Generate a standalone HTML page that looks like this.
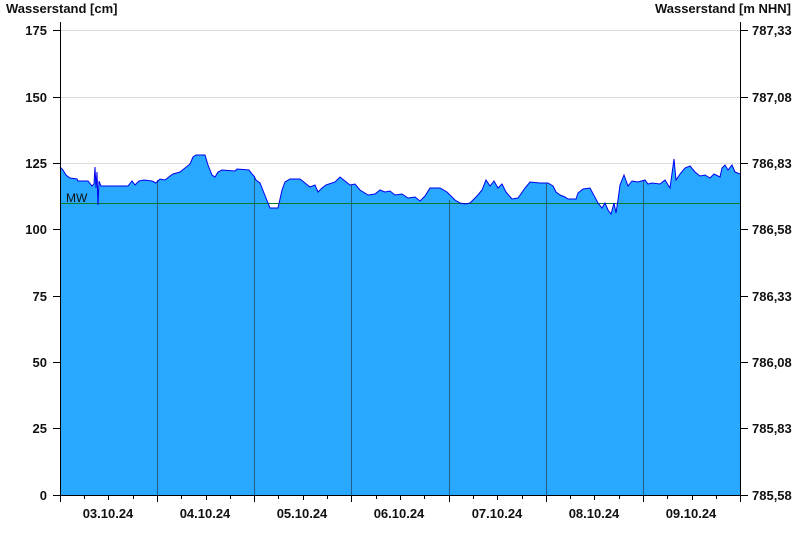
<!DOCTYPE html>
<html><head><meta charset="utf-8"><style>
html,body{margin:0;padding:0;background:#fff}
svg{display:block;font-family:"Liberation Sans",Arial,sans-serif;font-weight:bold;font-size:13px}
</style></head><body>
<svg width="800" height="550" viewBox="0 0 800 550" xmlns="http://www.w3.org/2000/svg">
<rect width="800" height="550" fill="#fff"/>
<text x="6" y="13" fill="#111">Wasserstand [cm]</text>
<text x="791" y="13" fill="#111" text-anchor="end">Wasserstand [m NHN]</text>
<g stroke="#dcdcdc" stroke-width="1">
<line x1="61" y1="30.5" x2="740" y2="30.5"/>
<line x1="61" y1="97.5" x2="740" y2="97.5"/>
<line x1="61" y1="163.5" x2="740" y2="163.5"/>
</g>
<path fill="#29a8ff" stroke="none" d="M60,495 L60,167 63,170 66,175 70,178 77,179 78,181 88,181 92,186 94,184 95,167 96,188 97,172 98,205 99,181 101,186 128,186 132,181 135,185 139,181 144,180 152,181 156,183 160,179 165,180 170,176 173,174 180,172 185,168 190,164 193,157 196,155 205,155 208,165 212,175 215,177 218,172 222,170 235,171 237,169 249,170 252,174 254,176 256,180 260,183 264,193 268,203 270,208 278,208 282,190 285,182 290,179 300,179 305,183 310,187 315,185 318,192 322,188 326,185 335,182 340,177 345,181 350,185 355,184 360,190 368,195 375,194 380,190 385,192 390,191 395,195 402,194 408,198 415,197 420,201 425,196 430,188 440,188 447,192 455,200 460,203 465,204 470,203 477,196 482,190 486,180 490,186 494,181 498,188 502,184 506,192 512,199 518,198 525,188 530,182 540,183 548,183 553,186 556,192 560,195 565,197 568,199 576,199 578,193 583,189 590,188 598,203 602,208 605,203 608,210 611,214 614,203 616,213 618,200 620,185 622,180 624,175 628,186 632,181 638,182 645,180 648,184 652,183 660,184 665,180 670,188 674,159 676,180 680,174 685,168 690,166 695,172 700,176 705,175 710,178 714,174 720,177 722,168 725,165 728,170 732,165 735,172 740,174 L740,495 Z"/>
<g stroke="#1f5f8a" stroke-width="1">
<line x1="157.5" y1="180" x2="157.5" y2="495"/>
<line x1="254.5" y1="176" x2="254.5" y2="495"/>
<line x1="351.5" y1="185" x2="351.5" y2="495"/>
<line x1="449.5" y1="200" x2="449.5" y2="495"/>
<line x1="546.5" y1="183" x2="546.5" y2="495"/>
<line x1="643.5" y1="180" x2="643.5" y2="495"/>
</g>
<line x1="61" y1="203.5" x2="740" y2="203.5" stroke="#0a7a2a" stroke-width="1"/>
<text x="66" y="202" fill="#111" font-weight="normal" font-size="12">MW</text>
<polyline fill="none" stroke="#0000ee" stroke-width="1" points="60,167 63,170 66,175 70,178 77,179 78,181 88,181 92,186 94,184 95,167 96,188 97,172 98,205 99,181 101,186 128,186 132,181 135,185 139,181 144,180 152,181 156,183 160,179 165,180 170,176 173,174 180,172 185,168 190,164 193,157 196,155 205,155 208,165 212,175 215,177 218,172 222,170 235,171 237,169 249,170 252,174 254,176 256,180 260,183 264,193 268,203 270,208 278,208 282,190 285,182 290,179 300,179 305,183 310,187 315,185 318,192 322,188 326,185 335,182 340,177 345,181 350,185 355,184 360,190 368,195 375,194 380,190 385,192 390,191 395,195 402,194 408,198 415,197 420,201 425,196 430,188 440,188 447,192 455,200 460,203 465,204 470,203 477,196 482,190 486,180 490,186 494,181 498,188 502,184 506,192 512,199 518,198 525,188 530,182 540,183 548,183 553,186 556,192 560,195 565,197 568,199 576,199 578,193 583,189 590,188 598,203 602,208 605,203 608,210 611,214 614,203 616,213 618,200 620,185 622,180 624,175 628,186 632,181 638,182 645,180 648,184 652,183 660,184 665,180 670,188 674,159 676,180 680,174 685,168 690,166 695,172 700,176 705,175 710,178 714,174 720,177 722,168 725,165 728,170 732,165 735,172 740,174"/>
<g stroke="#000" stroke-width="1">
<line x1="60.5" y1="22" x2="60.5" y2="496"/>
<line x1="740.5" y1="22" x2="740.5" y2="496"/>
<line x1="53" y1="495.5" x2="741" y2="495.5"/>
<line x1="53" y1="30.5" x2="60" y2="30.5"/><line x1="53" y1="97.5" x2="60" y2="97.5"/><line x1="53" y1="163.5" x2="60" y2="163.5"/><line x1="53" y1="229.5" x2="60" y2="229.5"/><line x1="53" y1="296.5" x2="60" y2="296.5"/><line x1="53" y1="362.5" x2="60" y2="362.5"/><line x1="53" y1="428.5" x2="60" y2="428.5"/>
<line x1="741" y1="30.5" x2="748" y2="30.5"/><line x1="741" y1="97.5" x2="748" y2="97.5"/><line x1="741" y1="163.5" x2="748" y2="163.5"/><line x1="741" y1="229.5" x2="748" y2="229.5"/><line x1="741" y1="296.5" x2="748" y2="296.5"/><line x1="741" y1="362.5" x2="748" y2="362.5"/><line x1="741" y1="428.5" x2="748" y2="428.5"/><line x1="741" y1="495.5" x2="748" y2="495.5"/>
<line x1="60.5" y1="495" x2="60.5" y2="502"/><line x1="157.5" y1="495" x2="157.5" y2="502"/><line x1="254.5" y1="495" x2="254.5" y2="502"/><line x1="351.5" y1="495" x2="351.5" y2="502"/><line x1="449.5" y1="495" x2="449.5" y2="502"/><line x1="546.5" y1="495" x2="546.5" y2="502"/><line x1="643.5" y1="495" x2="643.5" y2="502"/><line x1="740.5" y1="495" x2="740.5" y2="502"/>
<line x1="84.5" y1="495" x2="84.5" y2="499"/><line x1="108.5" y1="495" x2="108.5" y2="500"/><line x1="133.5" y1="495" x2="133.5" y2="499"/>
<line x1="181.5" y1="495" x2="181.5" y2="499"/><line x1="206.5" y1="495" x2="206.5" y2="500"/><line x1="230.5" y1="495" x2="230.5" y2="499"/>
<line x1="278.5" y1="495" x2="278.5" y2="499"/><line x1="303.5" y1="495" x2="303.5" y2="500"/><line x1="327.5" y1="495" x2="327.5" y2="499"/>
<line x1="376.5" y1="495" x2="376.5" y2="499"/><line x1="400.5" y1="495" x2="400.5" y2="500"/><line x1="424.5" y1="495" x2="424.5" y2="499"/>
<line x1="473.5" y1="495" x2="473.5" y2="499"/><line x1="497.5" y1="495" x2="497.5" y2="500"/><line x1="522.5" y1="495" x2="522.5" y2="499"/>
<line x1="570.5" y1="495" x2="570.5" y2="499"/><line x1="594.5" y1="495" x2="594.5" y2="500"/><line x1="619.5" y1="495" x2="619.5" y2="499"/>
<line x1="667.5" y1="495" x2="667.5" y2="499"/><line x1="692.5" y1="495" x2="692.5" y2="500"/><line x1="716.5" y1="495" x2="716.5" y2="499"/>
</g>
<g fill="#111" text-anchor="end">
<text x="47" y="35">175</text><text x="47" y="102">150</text><text x="47" y="168">125</text><text x="47" y="234">100</text><text x="47" y="301">75</text><text x="47" y="367">50</text><text x="47" y="433">25</text><text x="47" y="500">0</text>
</g>
<g fill="#111">
<text x="752" y="35">787,33</text><text x="752" y="102">787,08</text><text x="752" y="168">786,83</text><text x="752" y="234">786,58</text><text x="752" y="301">786,33</text><text x="752" y="367">786,08</text><text x="752" y="433">785,83</text><text x="752" y="500">785,58</text>
</g>
<g fill="#111" text-anchor="middle">
<text x="108" y="518">03.10.24</text><text x="205" y="518">04.10.24</text><text x="302" y="518">05.10.24</text><text x="399" y="518">06.10.24</text><text x="497" y="518">07.10.24</text><text x="594" y="518">08.10.24</text><text x="691" y="518">09.10.24</text>
</g>
</svg>
</body></html>
